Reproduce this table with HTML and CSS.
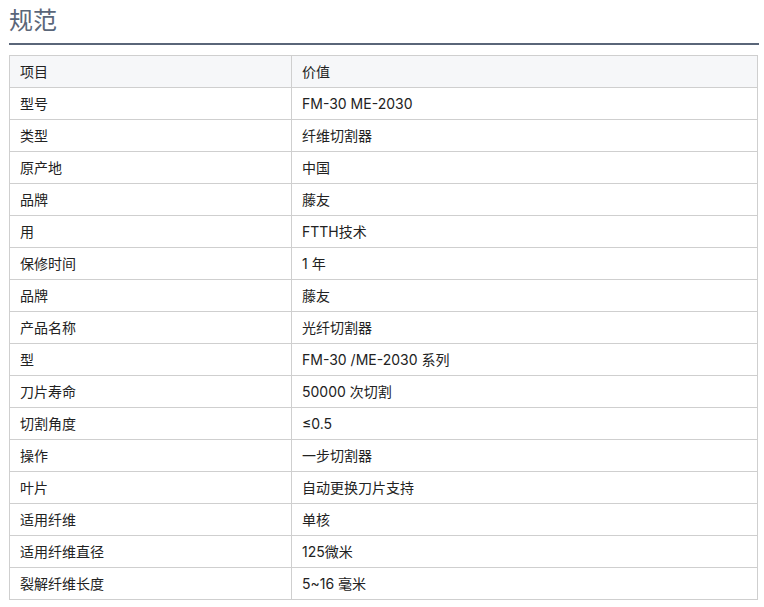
FILE: index.html
```html
<!DOCTYPE html>
<html lang="zh">
<head>
<meta charset="utf-8">
<title>规范</title>
<link rel="stylesheet" href="styles.css">
</head>
<body>
<div class="page">
  <h2 class="title">规范</h2>
  <table class="spec">
    <thead>
      <tr><th>项目</th><th>价值</th></tr>
    </thead>
    <tbody>
      <tr><td>型号</td><td>FM-30 ME-2030</td></tr>
      <tr><td>类型</td><td>纤维切割器</td></tr>
      <tr><td>原产地</td><td>中国</td></tr>
      <tr><td>品牌</td><td>藤友</td></tr>
      <tr><td>用</td><td>FTTH技术</td></tr>
      <tr><td>保修时间</td><td>1 年</td></tr>
      <tr><td>品牌</td><td>藤友</td></tr>
      <tr><td>产品名称</td><td>光纤切割器</td></tr>
      <tr><td>型</td><td>FM-30 /ME-2030 系列</td></tr>
      <tr><td>刀片寿命</td><td>50000 次切割</td></tr>
      <tr><td>切割角度</td><td>≤0.5</td></tr>
      <tr><td>操作</td><td>一步切割器</td></tr>
      <tr><td>叶片</td><td>自动更换刀片支持</td></tr>
      <tr><td>适用纤维</td><td>单核</td></tr>
      <tr><td>适用纤维直径</td><td>125微米</td></tr>
      <tr><td>裂解纤维长度</td><td>5~16 毫米</td></tr>
    </tbody>
  </table>
</div>
</body>
</html>
```
FILE: styles.css
```css
html, body {
  margin: 0;
  padding: 0;
  background: #ffffff;
}
body {
  font-family: Inter, "Noto Sans CJK SC", sans-serif;
  color: #222222;
}
.page {
  width: 750px;
  padding: 0 5px 0 9px;
}
.title {
  margin: 0;
  padding: 5px 0 6px 0;
  font-size: 24px;
  line-height: 32px;
  font-weight: 400;
  color: #5a6679;
  border-bottom: 2px solid #5a6679;
}
.spec {
  margin-top: 10px;
  width: 749px;
  border-collapse: collapse;
  font-size: 14px;
}
.spec th,
.spec td {
  border: 1px solid #cfcfcf;
  padding: 6px 10px;
  line-height: 19px;
  text-align: left;
  font-weight: 400;
  vertical-align: middle;
}
.spec th {
  background: #f6f7f9;
}
.spec th:first-child,
.spec td:first-child {
  width: 261px;
}
```
